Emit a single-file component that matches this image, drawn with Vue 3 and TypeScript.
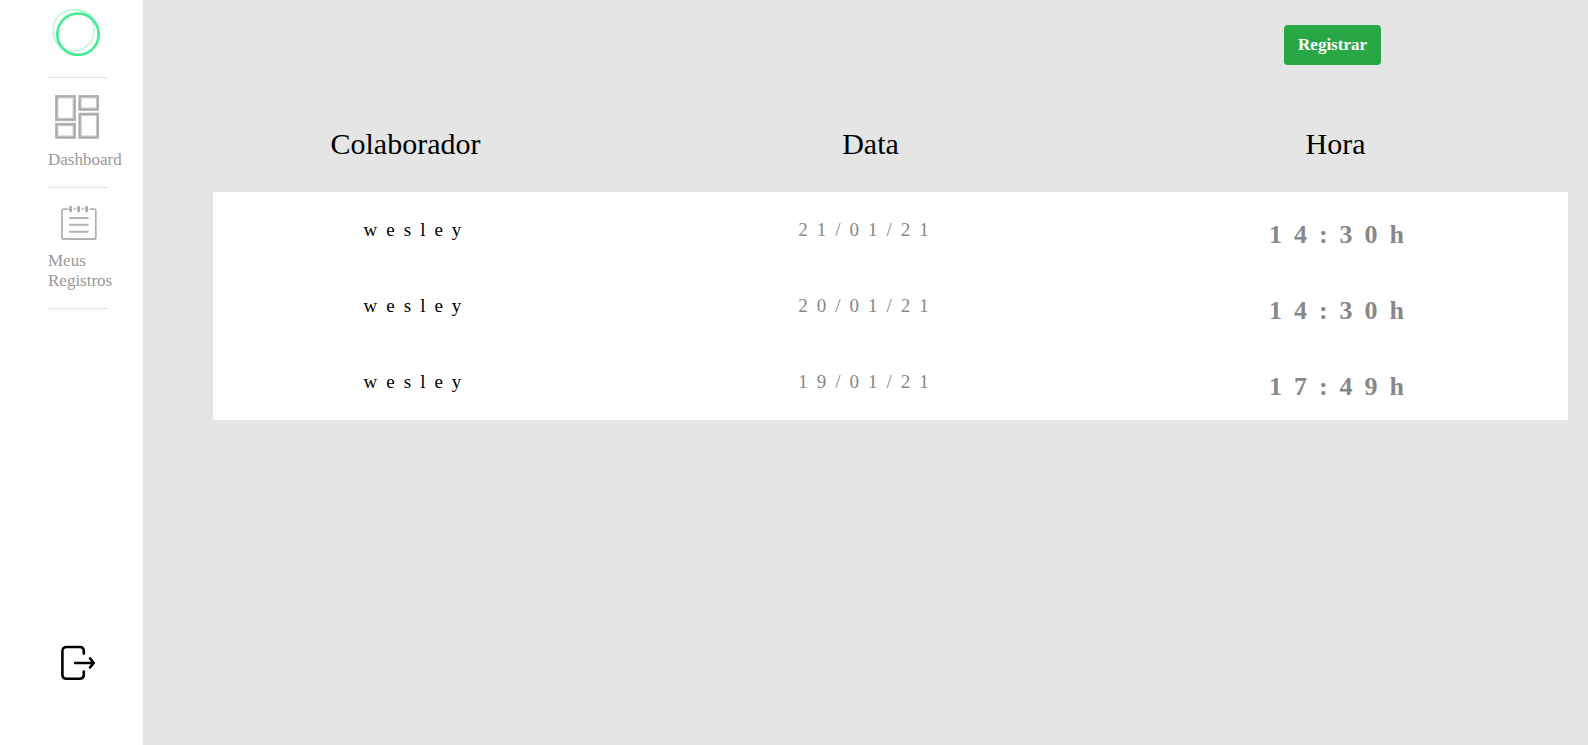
<script setup lang="ts">
interface Registro {
  id: number
  colaborador: string
  data: string
  hora: string
}

const registros: Registro[] = [
  { id: 1, colaborador: 'wesley', data: '21/01/21', hora: '14:30h' },
  { id: 2, colaborador: 'wesley', data: '20/01/21', hora: '14:30h' },
  { id: 3, colaborador: 'wesley', data: '19/01/21', hora: '17:49h' },
]
</script>

<template>
  <div class="layout">
    <aside class="sidebar">
      <svg class="logo" viewBox="0 0 60 77" fill="none" aria-hidden="true">
        <circle cx="25.6" cy="30.2" r="20.6" stroke="#a8f4cb" stroke-width="1.1" />
        <path d="M5.400 33Q7 47 20 53.500M28 10Q38 10 45 18" stroke="#b4f6d2" stroke-width="1.400" />
        <circle cx="30" cy="34.2" r="20.7" stroke="#43ec93" stroke-width="2.6" />
      </svg>
      <nav class="menu">
        <a class="item" href="#dashboard">
          <svg class="item-icon" width="44" height="44" viewBox="0 0 44 44" fill="none" aria-hidden="true">
            <g stroke="#c8c8c8" stroke-width="3.4">
              <rect x="1.7" y="1.7" width="17.6" height="22.8" />
              <rect x="25" y="1.7" width="17.6" height="12.5" />
              <rect x="1.7" y="29.5" width="17.6" height="12.7" />
              <rect x="25" y="19.3" width="17.6" height="22.9" />
            </g>
            <g stroke="#a9a9a9" stroke-width="1.6">
              <rect x="1.4" y="1.2" width="18.2" height="23.6" />
              <rect x="24.7" y="1.2" width="18.2" height="13.3" />
              <rect x="1.4" y="29.2" width="18.2" height="13.3" />
              <rect x="24.7" y="19" width="18.2" height="23.5" />
            </g>
          </svg>
          <span>Dashboard</span>
        </a>
        <a class="item" href="#registros">
          <svg class="item-icon registros-icon" width="36" height="35" viewBox="0 0 36 35" fill="none" stroke="#b3b3b3" stroke-linecap="round" aria-hidden="true">
            <path d="M6.5 4.2H2.6Q1 4.2 1 5.8V32.4Q1 34 2.6 34H33.2Q34.8 34 34.8 32.4V5.8Q34.8 4.2 33.2 4.2H29.5M13.4 4.2H13.8M21.4 4.2H21.8" stroke-width="1.8" />
            <path d="M9.6 2.2V5.8M17.6 2.2V5.8M25.6 2.2V5.8" stroke-width="3" stroke="#adadad" />
            <path d="M8.8 13H26.8M8.8 19.8H26.8M8.8 26.7H26.8" stroke-width="2" />
          </svg>
          <span>Meus Registros</span>
        </a>
      </nav>
      <button class="logout" type="button" aria-label="Sair">
        <svg width="36" height="36" viewBox="0 0 36 36" fill="none" stroke="#000" stroke-width="2.6" stroke-linecap="round" stroke-linejoin="round" aria-hidden="true">
          <path d="M23.8 8.6V6.2Q23.8 2 19.4 2H6.6Q2.4 2 2.4 6.2V29.6Q2.4 33.8 6.6 33.8H19.4Q23.8 33.8 23.8 29.6V26.5" />
          <path d="M15.2 18H33.6M30 13.4L33.8 18L30 22.4" />
        </svg>
      </button>
    </aside>

    <main class="content">
      <button class="registrar" type="button">Registrar</button>
      <table class="registros">
        <thead>
          <tr>
            <th scope="col">Colaborador</th>
            <th scope="col">Data</th>
            <th scope="col">Hora</th>
          </tr>
        </thead>
        <tbody>
          <tr v-for="registro in registros" :key="registro.id">
            <td class="nome">{{ registro.colaborador }}</td>
            <td class="data">{{ registro.data }}</td>
            <td class="hora">{{ registro.hora }}</td>
          </tr>
        </tbody>
      </table>
    </main>
  </div>
</template>

<style>
body {
  margin: 0;
  background: #e5e5e5;
}
</style>

<style scoped>
.layout {
  display: flex;
  min-height: 100vh;
  font-family: "Liberation Serif", "Times New Roman", serif;
  color: #000;
}

.sidebar {
  box-sizing: border-box;
  display: flex;
  flex: 0 0 143px;
  flex-direction: column;
  align-items: flex-start;
  padding: 0 35px 64px 48px;
  background: #fff;
}

.logo {
  display: block;
  width: 60px;
  height: 77px;
}

.menu {
  width: 60px;
}

.item {
  display: flex;
  flex-direction: column;
  gap: 11px;
  padding: 17px 0;
  border-top: 1px solid #e0e0e0;
  font-size: 17px;
  line-height: 20px;
  color: #999;
  text-decoration: none;
}

.item:last-child {
  border-bottom: 1px solid #e0e0e0;
}

.item-icon {
  display: block;
  margin-left: 7px;
}

.registros-icon {
  margin-left: 13px;
}

.logout {
  margin: auto 0 0 12px;
  padding: 0;
  border: 0;
  background: none;
  cursor: pointer;
}

.logout svg {
  display: block;
}

.content {
  display: flex;
  flex: 1;
  flex-direction: column;
  min-width: 0;
  padding: 25px 20px 0 70px;
}

.registrar {
  align-self: flex-end;
  margin-right: 187px;
  padding: 10px 14px;
  border: 0;
  border-radius: 4px;
  background: #28a745;
  color: #fff;
  font-family: inherit;
  font-size: 17px;
  font-weight: 700;
  line-height: 20px;
  cursor: pointer;
}

.registros {
  display: block;
  margin-top: 60px;
}

.registros thead,
.registros tbody {
  display: block;
}

.registros thead {
  margin-left: -40px;
}

.registros tr {
  display: grid;
}

.registros thead tr {
  grid-template-columns: repeat(3, 1fr);
}

.registros tbody tr {
  grid-template-columns: 408fr 494fr 453fr;
  padding: 26px 0 16px;
  background: #fff;
}

.registros th {
  padding: 0 0 30px;
  font-size: 30px;
  font-weight: 400;
  line-height: 37px;
  text-align: center;
}

.registros td {
  padding: 0;
  font-size: 19px;
  line-height: 24px;
  letter-spacing: 9px;
  text-align: center;
}

.registros .data {
  color: #888;
}

.registros .hora {
  padding-left: 2px;
  font-size: 26px;
  font-weight: 700;
  line-height: 34px;
  letter-spacing: 12px;
  color: #888;
}
</style>
